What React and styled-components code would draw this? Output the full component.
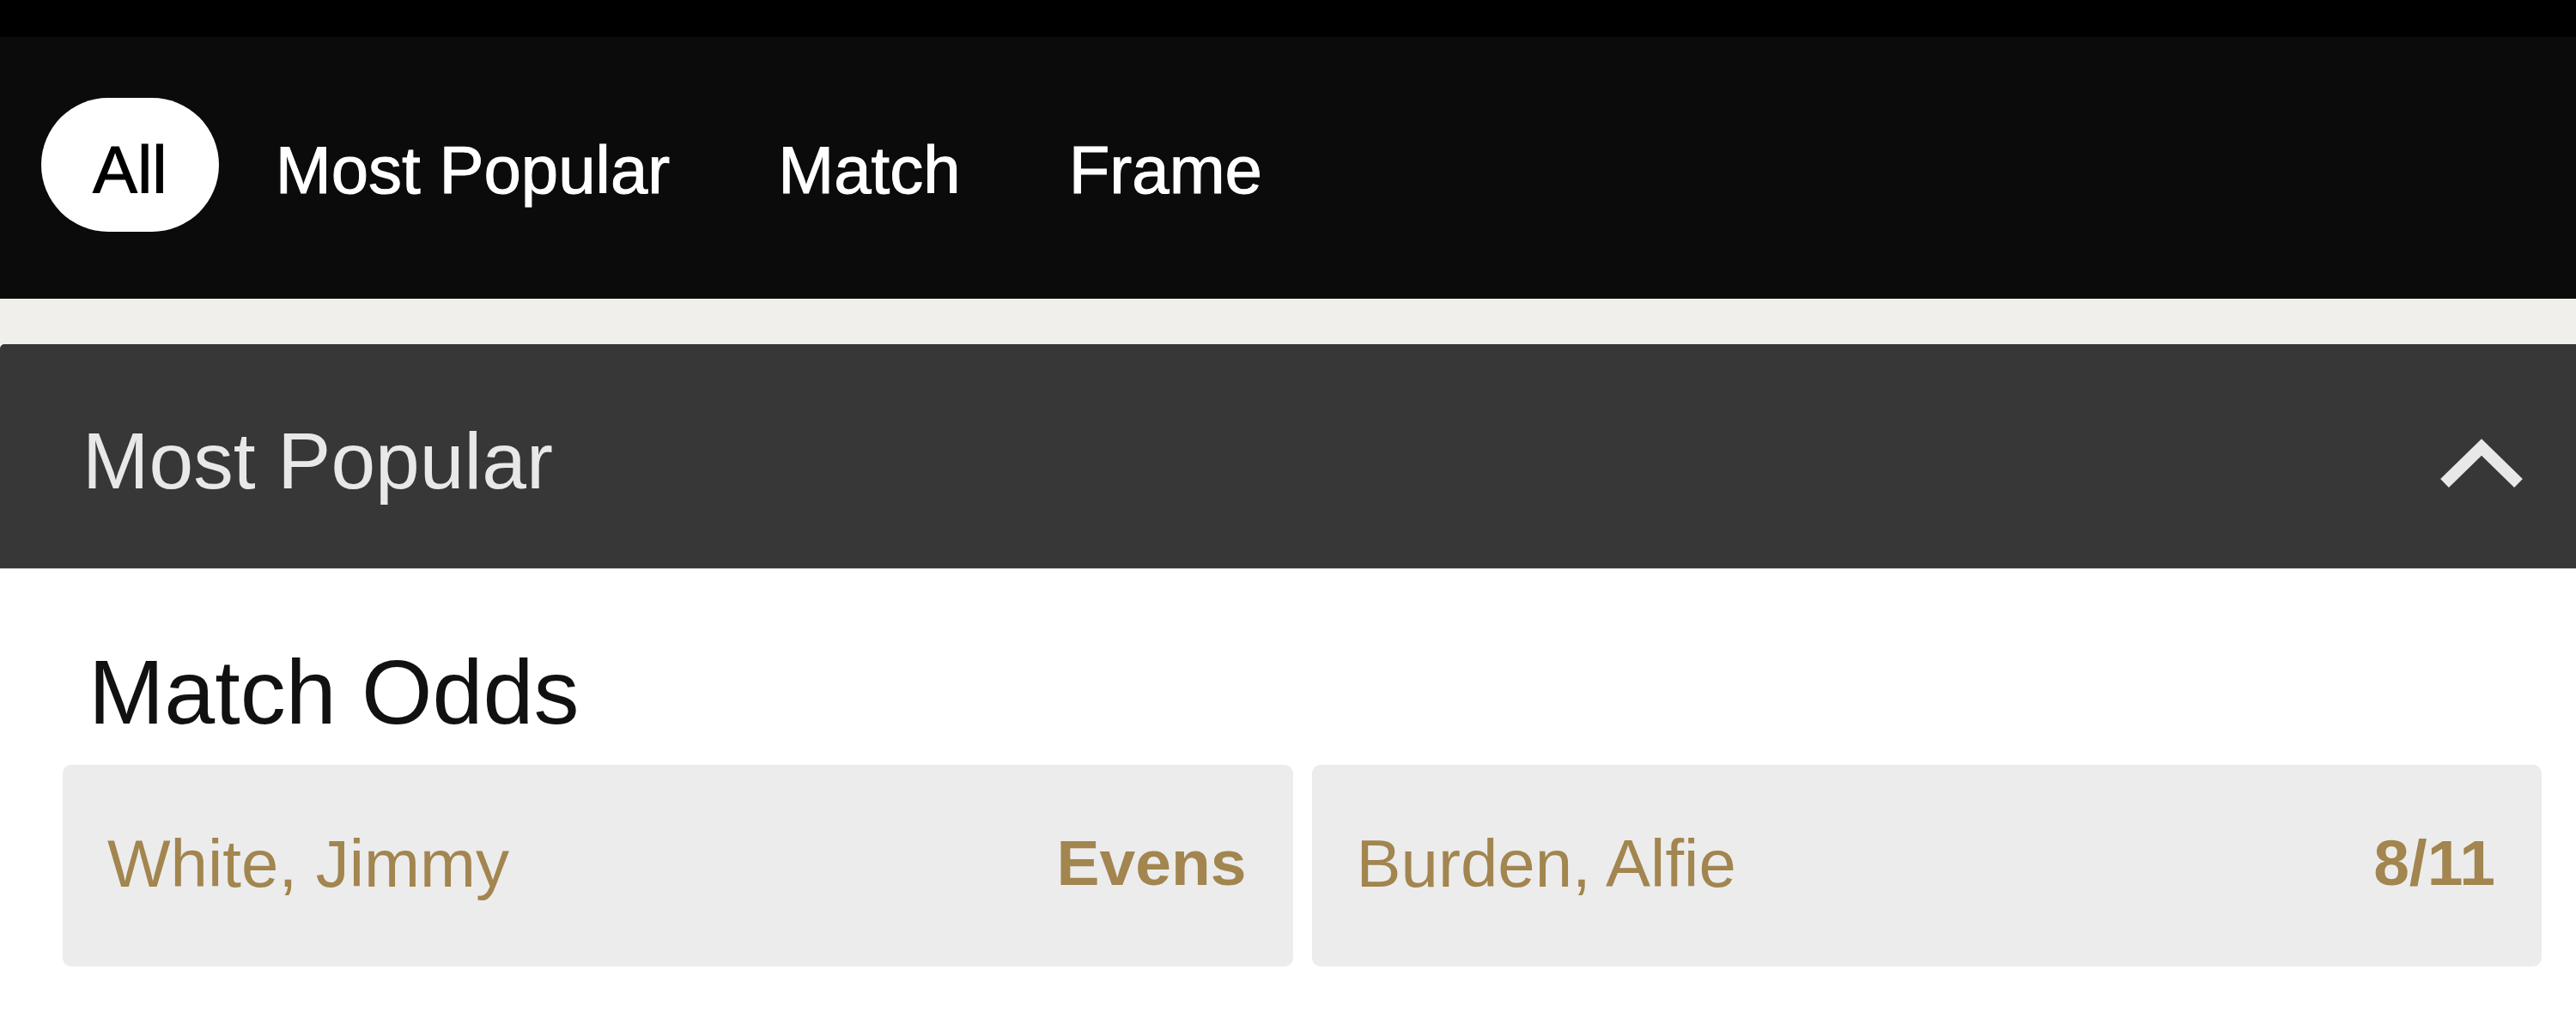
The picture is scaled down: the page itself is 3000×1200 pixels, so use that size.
import React from "react";
import styled, { createGlobalStyle } from "styled-components";

const GlobalStyle = createGlobalStyle`
  body {
    margin: 0;
    background: #ffffff;
    font-family: "Liberation Sans", Arial, sans-serif;
  }
`;

const StatusStrip = styled.div`
  height: 43px;
  background: #000000;
`;

const TabBar = styled.nav`
  height: 305px;
  box-sizing: border-box;
  background: #0b0b0b;
  display: flex;
  align-items: flex-start;
  gap: 6px;
  padding: 71px 0 0 48px;
`;

const Tab = styled.button`
  height: 156px;
  box-sizing: border-box;
  display: inline-flex;
  align-items: center;
  padding: 12px 60px 0;
  border: none;
  border-radius: 78px;
  background: ${(props) => (props.active ? "#ffffff" : "transparent")};
  color: ${(props) => (props.active ? "#000000" : "#ffffff")};
  font-family: inherit;
  font-size: 78px;
  line-height: 1;
  -webkit-text-stroke: 1px currentColor;
  cursor: pointer;
`;

const Spacer = styled.div`
  height: 53px;
  background: #f0efeb;
`;

const SectionHeader = styled.div`
  height: 262px;
  box-sizing: border-box;
  background: #373737;
  border-top-left-radius: 5px;
  border-bottom: 1px solid #c9c9c9;
  display: flex;
  align-items: center;
  justify-content: space-between;
  padding: 12px 60px 0 96px;
  color: #e8e8e8;
  font-size: 93px;
  line-height: 1;
`;

const Chevron = styled.svg`
  width: 100px;
  height: 58px;
  margin-top: 4px;
`;

const MarketTitle = styled.h2`
  margin: 90px 0 0 103px;
  font-size: 106px;
  font-weight: 400;
  line-height: 1;
  color: #111111;
`;

const OddsRow = styled.div`
  display: grid;
  grid-template-columns: 1fr 1fr;
  gap: 22px;
  padding: 32px 40px 0 73px;
`;

const OddsButton = styled.button`
  height: 235px;
  box-sizing: border-box;
  display: flex;
  align-items: center;
  justify-content: space-between;
  padding: 0 54px 6px 52px;
  border: none;
  border-radius: 10px;
  background: #ececec;
  color: #a2854f;
  font-family: inherit;
  font-size: 78px;
  line-height: 1;
  cursor: pointer;
`;

const Price = styled.span`
  font-weight: 700;
  font-size: 75px;
`;

const tabs = ["All", "Most Popular", "Match", "Frame"];

const selections = [
  { name: "White, Jimmy", price: "Evens" },
  { name: "Burden, Alfie", price: "8/11" },
];

export default function App() {
  return (
    <>
      <GlobalStyle />
      <StatusStrip />
      <TabBar>
        {tabs.map((t, i) => (
          <Tab key={t} active={i === 0}>
            {t}
          </Tab>
        ))}
      </TabBar>
      <Spacer />
      <SectionHeader>
        <span>Most Popular</span>
        <Chevron viewBox="0 0 100 58">
          <polyline
            points="7,52 50,10 93,52"
            fill="none"
            stroke="#e8e8e8"
            strokeWidth="14"
            strokeLinecap="butt"
            strokeLinejoin="miter"
          />
        </Chevron>
      </SectionHeader>
      <MarketTitle>Match Odds</MarketTitle>
      <OddsRow>
        {selections.map((s) => (
          <OddsButton key={s.name}>
            <span>{s.name}</span>
            <Price>{s.price}</Price>
          </OddsButton>
        ))}
      </OddsRow>
    </>
  );
}
